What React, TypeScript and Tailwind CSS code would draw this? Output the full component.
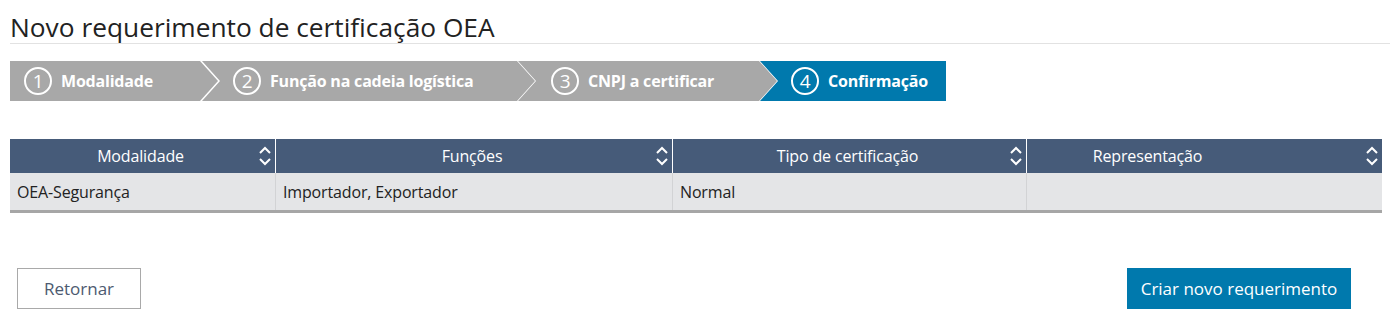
import React from 'react';

const steps = [
  { n: 1, label: 'Modalidade', w: 'w-[208px]', ml: '', pl: 'pl-[14px]', clip: '[clip-path:polygon(0_0,calc(100%-18px)_0,100%_50%,calc(100%-18px)_100%,0_100%)]', active: false },
  { n: 2, label: 'Função na cadeia logística', w: 'w-[333px]', ml: '-ml-[16px]', pl: 'pl-[31px]', clip: '[clip-path:polygon(0_0,calc(100%-18px)_0,100%_50%,calc(100%-18px)_100%,0_100%,18px_50%)]', active: false },
  { n: 3, label: 'CNPJ a certificar', w: 'w-[259px]', ml: '-ml-[17px]', pl: 'pl-[33px]', clip: '[clip-path:polygon(0_0,calc(100%-18px)_0,100%_50%,calc(100%-18px)_100%,0_100%,18px_50%)]', active: false },
  { n: 4, label: 'Confirmação', w: 'w-[186px]', ml: '-ml-[17px]', pl: 'pl-[31px]', clip: '[clip-path:polygon(0_0,100%_0,100%_100%,0_100%,18px_50%)]', active: true },
];

const SortIcon = () => (
  <svg width="12" height="20" viewBox="0 0 12 20" fill="none" stroke="white" strokeWidth="2" className="shrink-0">
    <path d="M1 7 L6 2 L11 7" />
    <path d="M1 13 L6 18 L11 13" />
  </svg>
);

const columns = [
  { title: 'Modalidade', w: 'w-[265px]', pad: 'pl-[12px] pr-[4px]' },
  { title: 'Funções', w: 'w-[397px]', pad: 'pl-[12px] pr-[4px]' },
  { title: 'Tipo de certificação', w: 'w-[354px]', pad: 'pl-[12px] pr-[4px]' },
  { title: 'Representação', w: 'flex-1', pad: 'pl-[12px] pr-[4px]' },
];

const row = ['OEA-Segurança', 'Importador, Exportador', 'Normal', ''];

export default function App() {
  return (
    <div className="w-[1390px] h-[323px] bg-white overflow-hidden" style={{ fontFamily: '"Open Sans", "Liberation Sans", sans-serif' }}>
      <div className="pl-[10px] pt-[11px]">
        <h1 className="text-[26.3px] leading-[32px] text-[#222] font-normal">Novo requerimento de certificação OEA</h1>
        <div className="h-px bg-[#e2e2e2]" />
      </div>

      <div className="ml-[10px] mt-[17px] flex h-[40px]">
        {steps.map((s) => (
          <div
            key={s.n}
            className={`${s.w} ${s.ml} ${s.pl} ${s.clip} shrink-0 flex items-center gap-[9px] text-white font-bold text-[16px] tracking-[-0.2px] ${s.active ? 'bg-[#0079ad]' : 'bg-[#a8a8a8]'}`}
          >
            <span className="w-[28px] h-[28px] rounded-full border-2 border-white flex items-center justify-center text-[19px] font-normal leading-none">
              {s.n}
            </span>
            <span>{s.label}</span>
          </div>
        ))}
      </div>

      <div className="ml-[10px] mt-[38px] w-[1372px] border-b-[3px] border-[#a6a6a6]">
        <div className="flex h-[34px] bg-[#465b79] text-white text-[16px]">
          {columns.map((c, i) => (
            <div key={c.title} className={`${c.w} ${c.pad} flex items-center ${i > 0 ? 'border-l border-white' : ''}`}>
              <span className={`flex-1 text-center tracking-[-0.15px] ${i === 3 ? 'pr-[110px]' : ''}`}>{c.title}</span>
              <SortIcon />
            </div>
          ))}
        </div>
        <div className="flex h-[37px] bg-[#e4e5e7] text-[16px] text-[#222]">
          {columns.map((c, i) => (
            <div key={c.title} className={`${c.w} flex items-center pl-[7px] tracking-[-0.15px] ${i > 0 ? 'border-l border-[#d2d3d5]' : ''}`}>
              {row[i]}
            </div>
          ))}
        </div>
      </div>

      <div className="mt-[55px] flex justify-between pl-[17px] pr-[39px]">
        <button className="w-[124px] h-[41px] border border-[#a9a9a9] bg-white text-[17px] text-[#4d5a70]">Retornar</button>
        <button className="w-[224px] h-[41px] bg-[#0079ad] text-[17px] text-white">Criar novo requerimento</button>
      </div>
    </div>
  );
}
